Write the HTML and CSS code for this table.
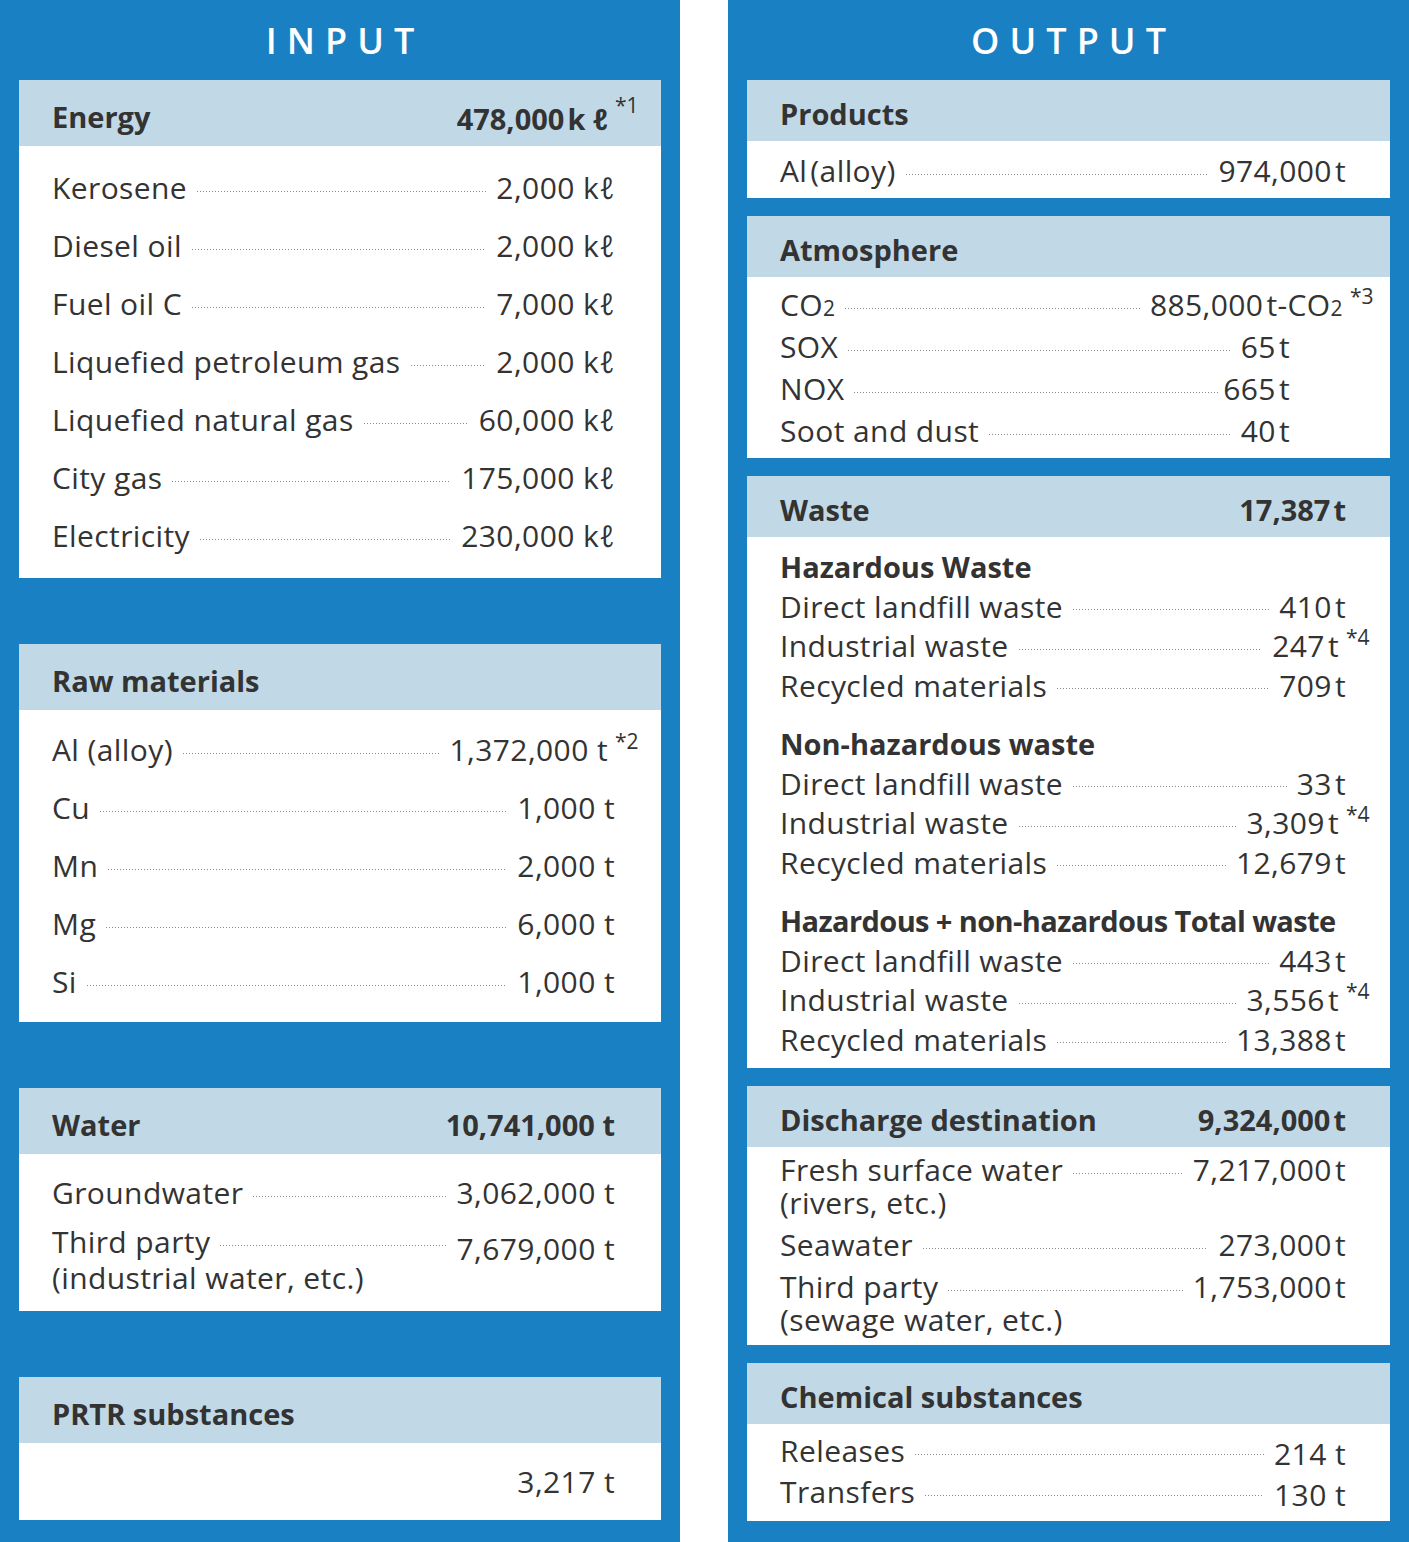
FILE: index.html
```html
<!DOCTYPE html>
<html lang="en">
<head>
<meta charset="utf-8">
<title>Input / Output</title>
<link rel="stylesheet" href="styles.css">
</head>
<body>
<div class="page">
  <section class="panel panel-in">
    <h1 class="panel-title">INPUT</h1>

    <div class="card">
      <div class="card-head"><span>Energy</span><span class="val">478,000<span class="u">k ℓ</span><span class="note note-head">*1</span></span></div>
      <div class="card-body body-energy">
        <div class="row"><span class="lbl">Kerosene</span><span class="dots"></span><span class="val">2,000 kℓ</span></div>
        <div class="row"><span class="lbl">Diesel oil</span><span class="dots"></span><span class="val">2,000 kℓ</span></div>
        <div class="row"><span class="lbl">Fuel oil C</span><span class="dots"></span><span class="val">7,000 kℓ</span></div>
        <div class="row"><span class="lbl">Liquefied petroleum gas</span><span class="dots"></span><span class="val">2,000 kℓ</span></div>
        <div class="row"><span class="lbl">Liquefied natural gas</span><span class="dots"></span><span class="val">60,000 kℓ</span></div>
        <div class="row"><span class="lbl">City gas</span><span class="dots"></span><span class="val">175,000 kℓ</span></div>
        <div class="row"><span class="lbl">Electricity</span><span class="dots"></span><span class="val">230,000 kℓ</span></div>
      </div>
    </div>

    <div class="card">
      <div class="card-head"><span>Raw materials</span></div>
      <div class="card-body body-raw">
        <div class="row"><span class="lbl">Al (alloy)</span><span class="dots"></span><span class="val">1,372,000 t<span class="note">*2</span></span></div>
        <div class="row"><span class="lbl">Cu</span><span class="dots"></span><span class="val">1,000 t</span></div>
        <div class="row"><span class="lbl">Mn</span><span class="dots"></span><span class="val">2,000 t</span></div>
        <div class="row"><span class="lbl">Mg</span><span class="dots"></span><span class="val">6,000 t</span></div>
        <div class="row"><span class="lbl">Si</span><span class="dots"></span><span class="val">1,000 t</span></div>
      </div>
    </div>

    <div class="card">
      <div class="card-head"><span>Water</span><span class="val">10,741,000 t</span></div>
      <div class="card-body body-water">
        <div class="row"><span class="lbl">Groundwater</span><span class="dots"></span><span class="val">3,062,000 t</span></div>
        <div class="entry">
          <div class="row"><span class="lbl">Third party</span><span class="dots"></span><span class="val val-lower">7,679,000 t</span></div>
          <div class="cont">(industrial water, etc.)</div>
        </div>
      </div>
    </div>

    <div class="card">
      <div class="card-head"><span>PRTR substances</span></div>
      <div class="card-body body-prtr">
        <div class="row row-end"><span class="val">3,217 t</span></div>
      </div>
    </div>
  </section>

  <section class="panel panel-out">
    <h1 class="panel-title">OUTPUT</h1>

    <div class="card">
      <div class="card-head"><span>Products</span></div>
      <div class="card-body body-products">
        <div class="row"><span class="lbl">Al<span class="paren">(alloy)</span></span><span class="dots"></span><span class="val">974,000<span class="u">t</span></span></div>
      </div>
    </div>

    <div class="card">
      <div class="card-head"><span>Atmosphere</span></div>
      <div class="card-body body-atmo">
        <div class="row"><span class="lbl">CO<span class="sub">2</span></span><span class="dots"></span><span class="val val-co2">885,000<span class="u">t-CO<span class="sub">2</span></span><span class="note">*3</span></span></div>
        <div class="row"><span class="lbl">SOX</span><span class="dots"></span><span class="val">65<span class="u">t</span></span></div>
        <div class="row"><span class="lbl">NOX</span><span class="dots dots-tight"></span><span class="val">665<span class="u">t</span></span></div>
        <div class="row"><span class="lbl">Soot and dust</span><span class="dots"></span><span class="val">40<span class="u">t</span></span></div>
      </div>
    </div>

    <div class="card">
      <div class="card-head"><span>Waste</span><span class="val">17,387<span class="u">t</span></span></div>
      <div class="card-body body-waste">
        <div class="group">
          <div class="sub-head">Hazardous Waste</div>
          <div class="row"><span class="lbl">Direct landfill waste</span><span class="dots"></span><span class="val">410<span class="u">t</span></span></div>
          <div class="row"><span class="lbl">Industrial waste</span><span class="dots"></span><span class="val">247<span class="u">t</span><span class="note">*4</span></span></div>
          <div class="row"><span class="lbl">Recycled materials</span><span class="dots"></span><span class="val">709<span class="u">t</span></span></div>
        </div>
        <div class="group">
          <div class="sub-head">Non-hazardous waste</div>
          <div class="row"><span class="lbl">Direct landfill waste</span><span class="dots"></span><span class="val">33<span class="u">t</span></span></div>
          <div class="row"><span class="lbl">Industrial waste</span><span class="dots"></span><span class="val">3,309<span class="u">t</span><span class="note">*4</span></span></div>
          <div class="row"><span class="lbl">Recycled materials</span><span class="dots"></span><span class="val">12,679<span class="u">t</span></span></div>
        </div>
        <div class="group">
          <div class="sub-head sub-head-long">Hazardous + non-hazardous Total waste</div>
          <div class="row"><span class="lbl">Direct landfill waste</span><span class="dots"></span><span class="val">443<span class="u">t</span></span></div>
          <div class="row"><span class="lbl">Industrial waste</span><span class="dots"></span><span class="val">3,556<span class="u">t</span><span class="note">*4</span></span></div>
          <div class="row"><span class="lbl">Recycled materials</span><span class="dots"></span><span class="val">13,388<span class="u">t</span></span></div>
        </div>
      </div>
    </div>

    <div class="card">
      <div class="card-head"><span>Discharge destination</span><span class="val">9,324,000<span class="u">t</span></span></div>
      <div class="card-body body-discharge">
        <div class="entry">
          <div class="row"><span class="lbl">Fresh surface water</span><span class="dots"></span><span class="val">7,217,000<span class="u">t</span></span></div>
          <div class="cont">(rivers, etc.)</div>
        </div>
        <div class="row"><span class="lbl">Seawater</span><span class="dots"></span><span class="val">273,000<span class="u">t</span></span></div>
        <div class="entry">
          <div class="row"><span class="lbl">Third party</span><span class="dots"></span><span class="val">1,753,000<span class="u">t</span></span></div>
          <div class="cont">(sewage water, etc.)</div>
        </div>
      </div>
    </div>

    <div class="card">
      <div class="card-head"><span>Chemical substances</span></div>
      <div class="card-body body-chem">
        <div class="row"><span class="lbl">Releases</span><span class="dots"></span><span class="val val-low">214 t</span></div>
        <div class="row"><span class="lbl">Transfers</span><span class="dots"></span><span class="val val-low">130 t</span></div>
      </div>
    </div>
  </section>
</div>
</body>
</html>
```

FILE: styles.css
```css
* { box-sizing: border-box; }

html, body {
  margin: 0;
  padding: 0;
  background: #ffffff;
}

body {
  font-family: "Open Sans", "Noto Sans", sans-serif;
  color: #333333;
  font-size: 30px;
}

.page {
  display: flex;
  width: 1409px;
  height: 1542px;
  gap: 48px;
}

.panel {
  background: #1a80c4;
  display: flex;
  flex-direction: column;
  padding: 0 19px;
}

.panel-in { width: 680px; gap: 66px; }
.panel-out { width: 681px; gap: 18px; }

.panel-title {
  margin: 0;
  height: 80px;
  line-height: 82px;
  text-align: center;
  color: #ffffff;
  font-size: 36px;
  font-weight: 600;
  letter-spacing: 0.28em;
  text-indent: 0.28em;
}

.panel-in .panel-title { margin-bottom: -66px; }
.panel-out .panel-title { margin-bottom: -18px; }

.card {
  background: #ffffff;
}

.card-head {
  background: #c1d9e7;
  font-weight: 700;
  font-size: 29px;
  display: flex;
  justify-content: space-between;
  align-items: center;
  padding: 6px 46px 0 33px;
  height: 66px;
}

.panel-out .card-head {
  height: 61px;
  padding-right: 44px;
}

.card-body {
  padding: 0 46px 0 33px;
  letter-spacing: 0.4px;
}

.panel-out .card-body { padding-right: 44px; }

.row {
  display: flex;
  align-items: flex-start;
  line-height: var(--lh, 58px);
}

.lbl { white-space: nowrap; }

.cont { line-height: var(--lh, 58px); }

.dots {
  flex: 1;
  height: 2px;
  background-image: linear-gradient(to right, #8a8a8a 1.3px, transparent 1.3px);
  background-size: 3px 1px;
  background-repeat: repeat-x;
  background-position: 0 0;
  margin: calc(var(--lh, 58px) / 2 + 3px) 10px 0 10px;
}

.val {
  position: relative;
  white-space: nowrap;
}

.val-low { top: 3px; }
.val-lower { top: 7px; }

.u { margin-left: 3px; }

.note {
  display: inline-block;
  width: 0;
  white-space: nowrap;
  margin-left: 7px;
  font-size: 21px;
  font-weight: 400;
  letter-spacing: 0;
  line-height: 1;
  vertical-align: 12px;
}

.note-head { vertical-align: 17px; }

.sub {
  font-size: 0.7em;
  line-height: 1;
}

.paren { margin-left: 3px; }

.row-end { justify-content: flex-end; }

/* left sections */
.body-energy { padding-top: 13px; padding-bottom: 13px; }
.body-raw { padding-top: 11px; padding-bottom: 11px; }
.body-water {
  --lh: 36px;
  padding-top: 21px;
  padding-bottom: 15px;
  display: flex;
  flex-direction: column;
  gap: 13px;
}
.body-prtr { --lh: 77px; }

/* right sections */
.body-products { --lh: 55px; padding-top: 2px; }
.panel-out .body-atmo {
  --lh: 42px;
  padding-top: 7px;
  padding-bottom: 6px;
  padding-right: 100px;
}
.val-co2 { margin-right: -60px; }
.dots-tight { margin-right: 4px; }

.body-waste {
  --lh: 39.5px;
  padding-top: 10px;
  padding-bottom: 9px;
  display: flex;
  flex-direction: column;
  gap: 19px;
}
.sub-head {
  font-weight: 700;
  font-size: 29px;
  letter-spacing: 0;
  white-space: nowrap;
  line-height: 39.5px;
}
.sub-head-long { letter-spacing: -0.6px; }

.body-discharge {
  --lh: 33px;
  padding-top: 6px;
  padding-bottom: 9px;
  display: flex;
  flex-direction: column;
  gap: 9px;
}

.body-chem {
  --lh: 41px;
  padding-top: 6px;
  padding-bottom: 9px;
}
```
